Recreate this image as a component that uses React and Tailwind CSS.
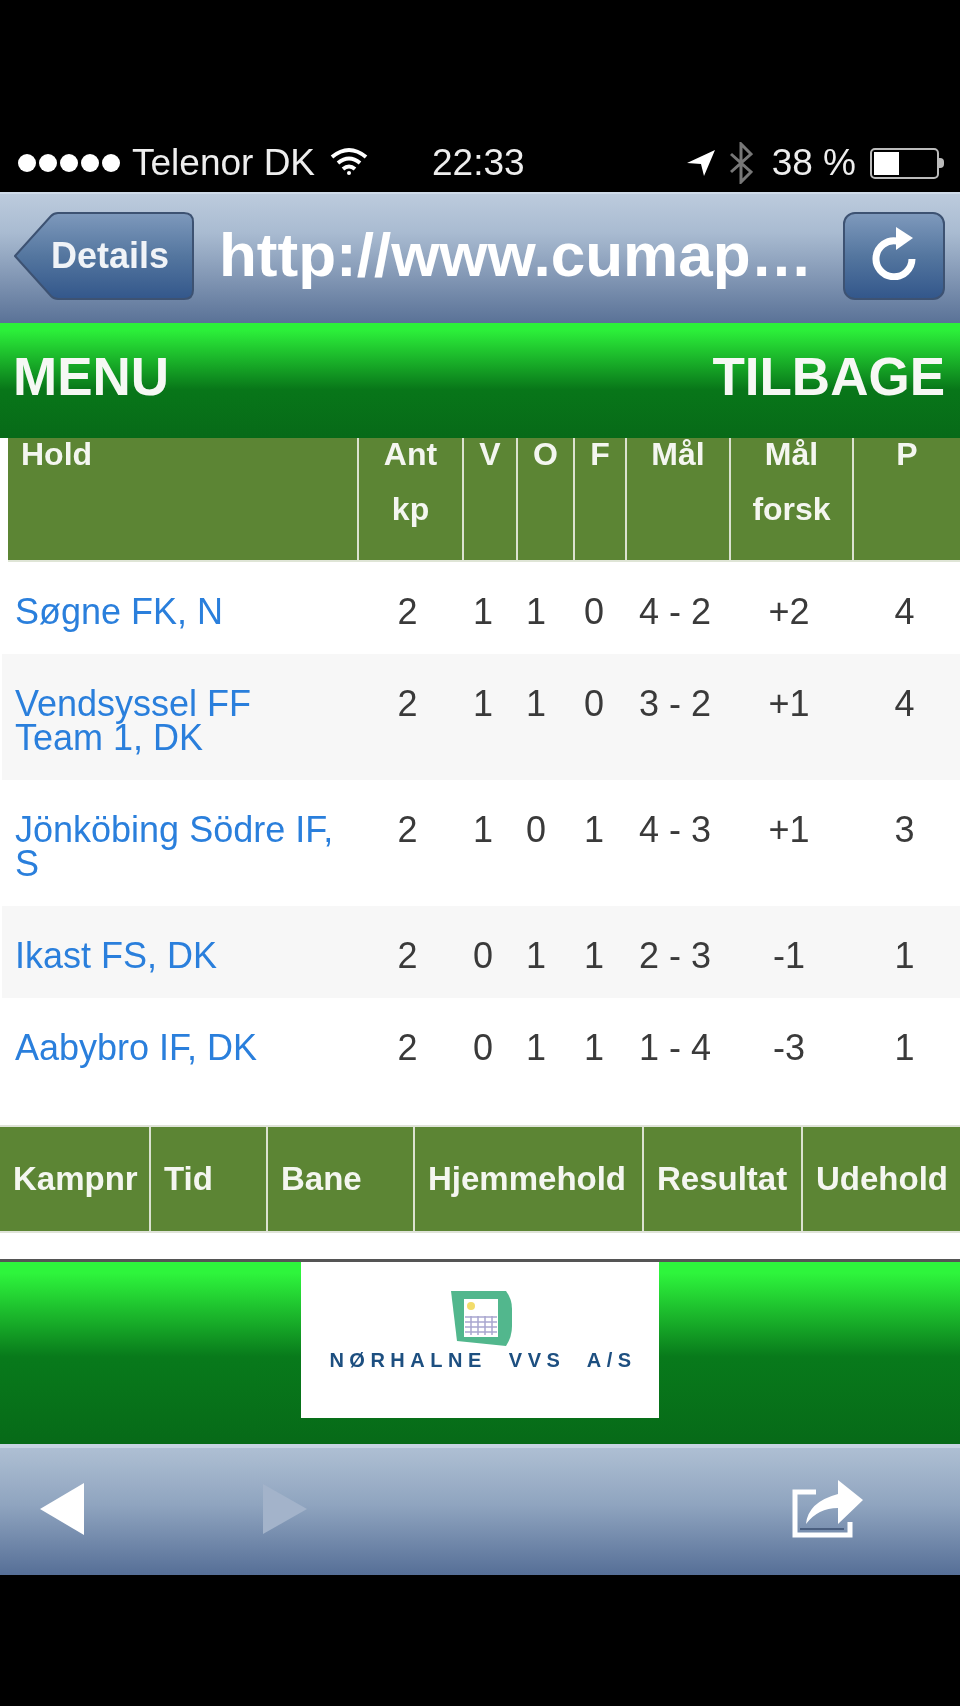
const teams = [
  { name: "Søgne FK, N", kp: 2, v: 1, o: 1, f: 0, maal: "4 - 2", forsk: "+2", p: 4 },
  { name: "Vendsyssel FF Team 1, DK", kp: 2, v: 1, o: 1, f: 0, maal: "3 - 2", forsk: "+1", p: 4 },
  { name: "Jönköbing Södre IF, S", kp: 2, v: 1, o: 0, f: 1, maal: "4 - 3", forsk: "+1", p: 3 },
  { name: "Ikast FS, DK", kp: 2, v: 0, o: 1, f: 1, maal: "2 - 3", forsk: "-1", p: 1 },
  { name: "Aabybro IF, DK", kp: 2, v: 0, o: 1, f: 1, maal: "1 - 4", forsk: "-3", p: 1 },
];

const headCols = [["Ant", "kp"], ["V"], ["O"], ["F"], ["Mål"], ["Mål", "forsk"]];

const matchCols = ["Kampnr", "Tid", "Bane", "Hjemmehold", "Resultat", "Udehold"];

const StatusBar = () => (
  <div className="flex h-[60px] items-center bg-black pt-[2px] text-[37px] text-[#eeeeee]">
    <div className="ml-[18px] flex gap-[3px]">
      {[0, 1, 2, 3, 4].map((i) => (
        <span key={i} className="h-[18px] w-[18px] rounded-full bg-white" />
      ))}
    </div>
    <span className="ml-[12px]">Telenor DK</span>
    <svg className="ml-[15px] mb-[2px]" width="38" height="30" viewBox="0 0 38 30" fill="none" stroke="white" strokeWidth="4">
      <path d="M2 10 Q19 -4 36 10" />
      <path d="M8 16 Q19 7 30 16" />
      <path d="M13 22 Q19 17 25 22" />
      <circle cx="19" cy="26" r="2" fill="white" stroke="none" />
    </svg>
    <span className="ml-[64px]">22:33</span>
    <svg className="ml-[161px]" width="30" height="28" viewBox="0 0 30 28">
      <polygon points="1,14 29,1 18,27 15,15" fill="white" />
    </svg>
    <svg className="ml-[13px]" width="24" height="42" viewBox="0 0 24 42" fill="none" stroke="#777777" strokeWidth="3">
      <path d="M2 12 L22 30 L12 40 L12 2 L22 12 L2 30" />
    </svg>
    <span className="ml-[19px]">38 %</span>
    <div className="ml-[14px] flex items-center">
      <div className="h-[31px] w-[69px] rounded-[5px] border-2 border-[#bbbbbb] p-[2px]">
        <div className="h-full w-[25px] bg-white" />
      </div>
      <div className="h-[10px] w-[5px] rounded-r-sm bg-[#bbbbbb]" />
    </div>
  </div>
);

const NavBar = () => (
  <div className="flex h-[131px] items-start border-t-2 border-[#cfdbe9] bg-[linear-gradient(#bccbdd_0%,#a9bbd1_30%,#5a7297_100%)] pt-[18px]">
    <div className="relative ml-[14px] flex h-[88px] w-[180px] items-center pl-[37px]">
      <svg className="absolute inset-0" width="180" height="88" viewBox="0 0 180 88">
        <defs>
          <linearGradient id="btn" x1="0" y1="0" x2="0" y2="1">
            <stop offset="0" stopColor="#7e99bc" />
            <stop offset="0.5" stopColor="#54769f" />
            <stop offset="1" stopColor="#33578b" />
          </linearGradient>
        </defs>
        <path
          d="M1 44 L37 4 Q40 1 44 1 H170 Q179 1 179 10 V78 Q179 87 170 87 H44 Q40 87 37 84 Z"
          fill="url(#btn)"
          stroke="#3d5272"
          strokeWidth="2"
        />
      </svg>
      <span className="relative text-[36px] font-bold text-[#f0f3f7]">Details</span>
    </div>
    <div className="mt-[5px] ml-[25px] w-[600px] text-[62px] leading-[76px] font-bold whitespace-nowrap text-white">
      http://www.cumap…
    </div>
    <div className="ml-[24px] flex h-[88px] w-[102px] items-center justify-center rounded-[12px] border-2 border-[#3d5272] bg-[linear-gradient(#7e99bc,#54769f_50%,#33578b)]">
      <svg className="mb-[6px]" width="46" height="54" viewBox="0 0 46 54" fill="none">
        <path d="M26 15 A18 18 0 1 0 41 33" stroke="white" strokeWidth="7" />
        <polygon points="25,1 42,12 25,24" fill="white" />
      </svg>
    </div>
  </div>
);

const Standings = () => (
  <div className="bg-white">
    <div className="ml-[8px] grid h-[124px] grid-cols-[351px_105px_54px_57px_52px_104px_123px_1fr] border-b-2 border-[#dfe5d6] bg-[#5c8534] text-[32px] leading-[32px] font-bold text-[#f4f6f0]">
      <div className="border-r-2 border-[#dbe2d0] pl-[13px]">Hold</div>
      {headCols.map((lines, i) => (
        <div key={i} className="border-r-2 border-[#dbe2d0] text-center">
          <div>{lines[0]}</div>
          {lines[1] && <div className="mt-[23px]">{lines[1]}</div>}
        </div>
      ))}
      <div className="text-center">P</div>
    </div>
    <div className="ml-[2px]">
      {teams.map((t, i) => (
        <div
          key={t.name}
          className={`grid grid-cols-[352px_107px_44px_62px_54px_108px_120px_1fr] pt-[33px] pb-[25px] text-center text-[36px] leading-[34px] text-[#3a3a3a] ${i % 2 === 1 ? "bg-[#f7f7f7]" : "bg-white"}`}
        >
          <div className="pr-[14px] pl-[13px] text-left text-[#2a7fdc]">{t.name}</div>
          <div>{t.kp}</div>
          <div>{t.v}</div>
          <div>{t.o}</div>
          <div>{t.f}</div>
          <div>{t.maal}</div>
          <div>{t.forsk}</div>
          <div>{t.p}</div>
        </div>
      ))}
    </div>
    <div className="mt-[35px] grid h-[108px] grid-cols-[151px_117px_147px_229px_159px_1fr] border-y-2 border-[#dfe3d8] bg-[#5c8534] text-[33px] font-bold text-[#f4f6f0]">
      {matchCols.map((c, i) => (
        <div
          key={c}
          className={`flex items-center pl-[13px] whitespace-nowrap ${i < 5 ? "border-r-2 border-[#dbe2d0]" : ""}`}
        >
          {c}
        </div>
      ))}
    </div>
    <div className="h-[26px]" />
  </div>
);

const Logo = () => (
  <div className="flex h-[156px] w-[358px] flex-col items-center bg-white pt-[27px]">
    <svg className="ml-[3px] blur-[0.6px]" width="62" height="58" viewBox="0 0 62 58">
      <path d="M0 2 L55 2 Q61 10 61 20 V37 Q61 48 55 57 L6 52 Z" fill="#52b78d" />
      <rect x="13" y="10" width="34" height="38" fill="white" />
      <circle cx="20" cy="17" r="4" fill="#f2dc6a" />
      <g stroke="#a9a6cf" strokeWidth="1.5">
        <path d="M14 28 H46 M14 33 H46 M14 38 H46 M14 43 H46" />
        <path d="M20 27 V46 M27 27 V46 M34 27 V46 M41 27 V46" />
      </g>
    </svg>
    <div className="mt-[3px] ml-[6px] text-[20px] leading-[20px] font-bold tracking-[0.275em] whitespace-pre text-[#1d4f80] blur-[0.7px]">
      NØRHALNE  VVS  A/S
    </div>
  </div>
);

const Toolbar = () => (
  <div className="flex h-[131px] items-start border-t-4 border-[#c6d3e3] bg-[linear-gradient(#aebfd3,#8fa4bf_45%,#566f97)] pt-[35px]">
    <svg className="ml-[40px]" width="44" height="52" viewBox="0 0 44 52">
      <polygon points="44,0 0,26 44,52" fill="white" />
    </svg>
    <svg className="mt-[1px] ml-[179px]" width="44" height="50" viewBox="0 0 44 50">
      <polygon points="0,0 44,25 0,50" fill="#a3b3ca" />
    </svg>
    <svg className="-mt-[3px] ml-[485px]" width="72" height="60" viewBox="0 0 72 60" fill="none">
      <path d="M24 12 H3 V55 H58 V42" stroke="white" strokeWidth="5" />
      <path d="M8 49 H52" stroke="#4a5f80" strokeWidth="2" />
      <path d="M14 44 Q16 22 46 14 V0 L71 20 L46 44 V28 Q26 28 14 44 Z" fill="white" />
    </svg>
  </div>
);

export default function App() {
  return (
    <div className="h-[1706px] overflow-hidden bg-black font-['Liberation_Sans',sans-serif] blur-[0.7px]">
      <div className="h-[132px]" />
      <StatusBar />
      <NavBar />
      <div className="flex h-[115px] items-start justify-between bg-[linear-gradient(#2cf03a_0%,#2cf03a_6%,#087619_58%,#076a18_100%)] px-[13px] pt-[24px] text-[53px] leading-[60px] font-bold text-[#f6f8f4]">
        <span>MENU</span>
        <span className="pr-[2px]">TILBAGE</span>
      </div>
      <Standings />
      <div className="flex h-[185px] justify-center border-t-[3px] border-[#555555] bg-[linear-gradient(#2ef53c_0%,#2ef53c_6%,#087a1b_52%,#076a18_100%)]">
        <Logo />
      </div>
      <Toolbar />
    </div>
  );
}
